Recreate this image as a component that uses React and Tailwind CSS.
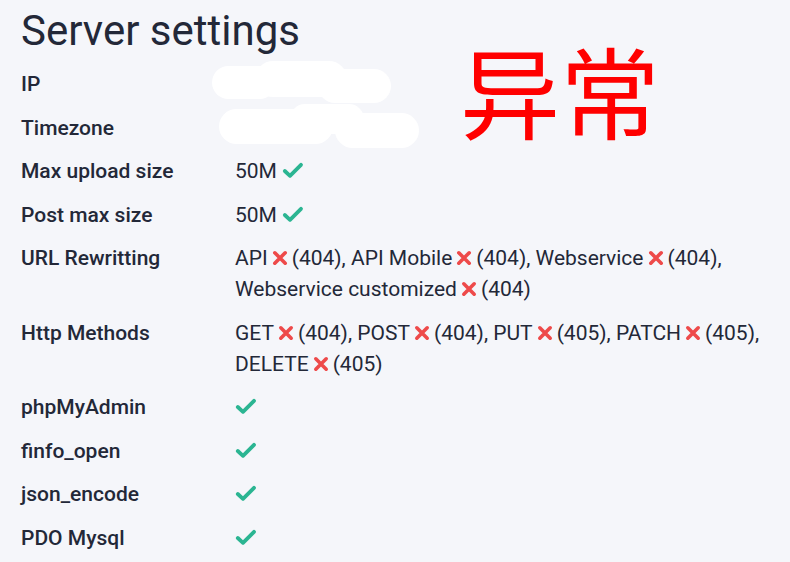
import React from 'react';

function Ok() {
  return (
    <svg viewBox="0 0 22 17" className="inline-block h-[17px] w-[22px] align-[-1px]" fill="none">
      <path d="M2.8 9 L8 13.8 L19 2.8" stroke="#2bb592" strokeWidth="3.8" strokeLinecap="round" strokeLinejoin="round" />
    </svg>
  );
}

function Fail() {
  return (
    <svg viewBox="0 0 16 16" className="mx-[4px] inline-block h-[16px] w-[16px] align-[-1px]" fill="none">
      <path d="M2.8 2.8 L13.2 13.2 M13.2 2.8 L2.8 13.2" stroke="#ee4a4a" strokeWidth="3.6" strokeLinecap="round" />
    </svg>
  );
}

function Code({ name, code, last }) {
  return (
    <>
      {name}
      <Fail />({code}){last ? '' : ', '}
    </>
  );
}

// white scribbles hiding the real values
function Redacted({ pills }) {
  return (
    <div className="relative h-[31px]">
      {pills.map((p, i) => (
        <div key={i} className={`absolute rounded-full bg-white ${p}`} />
      ))}
    </div>
  );
}

const rows = [
  {
    label: 'IP',
    value: (
      <Redacted
        pills={[
          'left-[-23px] top-[-3px] h-[33px] w-[64px]',
          'left-[20px] top-[-8px] h-[36px] w-[92px]',
          'left-[83px] top-[0px] h-[34px] w-[73px]',
        ]}
      />
    ),
  },
  {
    label: 'Timezone',
    value: (
      <Redacted
        pills={[
          'left-[-16px] top-[-4px] h-[35px] w-[114px]',
          'left-[55px] top-[-9px] h-[30px] w-[74px]',
          'left-[100px] top-[0px] h-[35px] w-[84px]',
        ]}
      />
    ),
  },
  { label: 'Max upload size', value: <>50M <Ok /></> },
  { label: 'Post max size', value: <>50M <Ok /></> },
  {
    label: 'URL Rewritting',
    value: (
      <>
        <Code name="API" code="404" /> <Code name="API Mobile" code="404" /> <Code name="Webservice" code="404" />{' '}
        <Code name="Webservice customized" code="404" last />
      </>
    ),
  },
  {
    label: 'Http Methods',
    value: (
      <>
        <Code name="GET" code="404" /> <Code name="POST" code="404" /> <Code name="PUT" code="405" />{' '}
        <Code name="PATCH" code="405" /> <Code name="DELETE" code="405" last />
      </>
    ),
  },
  { label: 'phpMyAdmin', value: <Ok /> },
  { label: 'finfo_open', value: <Ok /> },
  { label: 'json_encode', value: <Ok /> },
  { label: 'PDO Mysql', value: <Ok /> },
];

export default function App() {
  return (
    <div className="relative h-[562px] w-[790px] overflow-hidden bg-[#f5f6fa] pl-[21px] pt-[6px] font-['Roboto',sans-serif] text-[#232838]">
      <h1 className="text-[42px] leading-[50px] font-normal">Server settings</h1>

      <div className="mt-[13px] grid grid-cols-[214px_1fr] gap-y-[12.5px] text-[21px] leading-[31px]">
        {rows.map((r) => (
          <React.Fragment key={r.label}>
            <div className="font-medium">{r.label}</div>
            <div className="pr-[16px]">{r.value}</div>
          </React.Fragment>
        ))}
      </div>

      <div className="absolute left-[460px] top-[29px] font-['Noto_Sans_CJK_SC',sans-serif] text-[100px] leading-[120px] text-[#ff0000]">
        异常
      </div>
    </div>
  );
}
